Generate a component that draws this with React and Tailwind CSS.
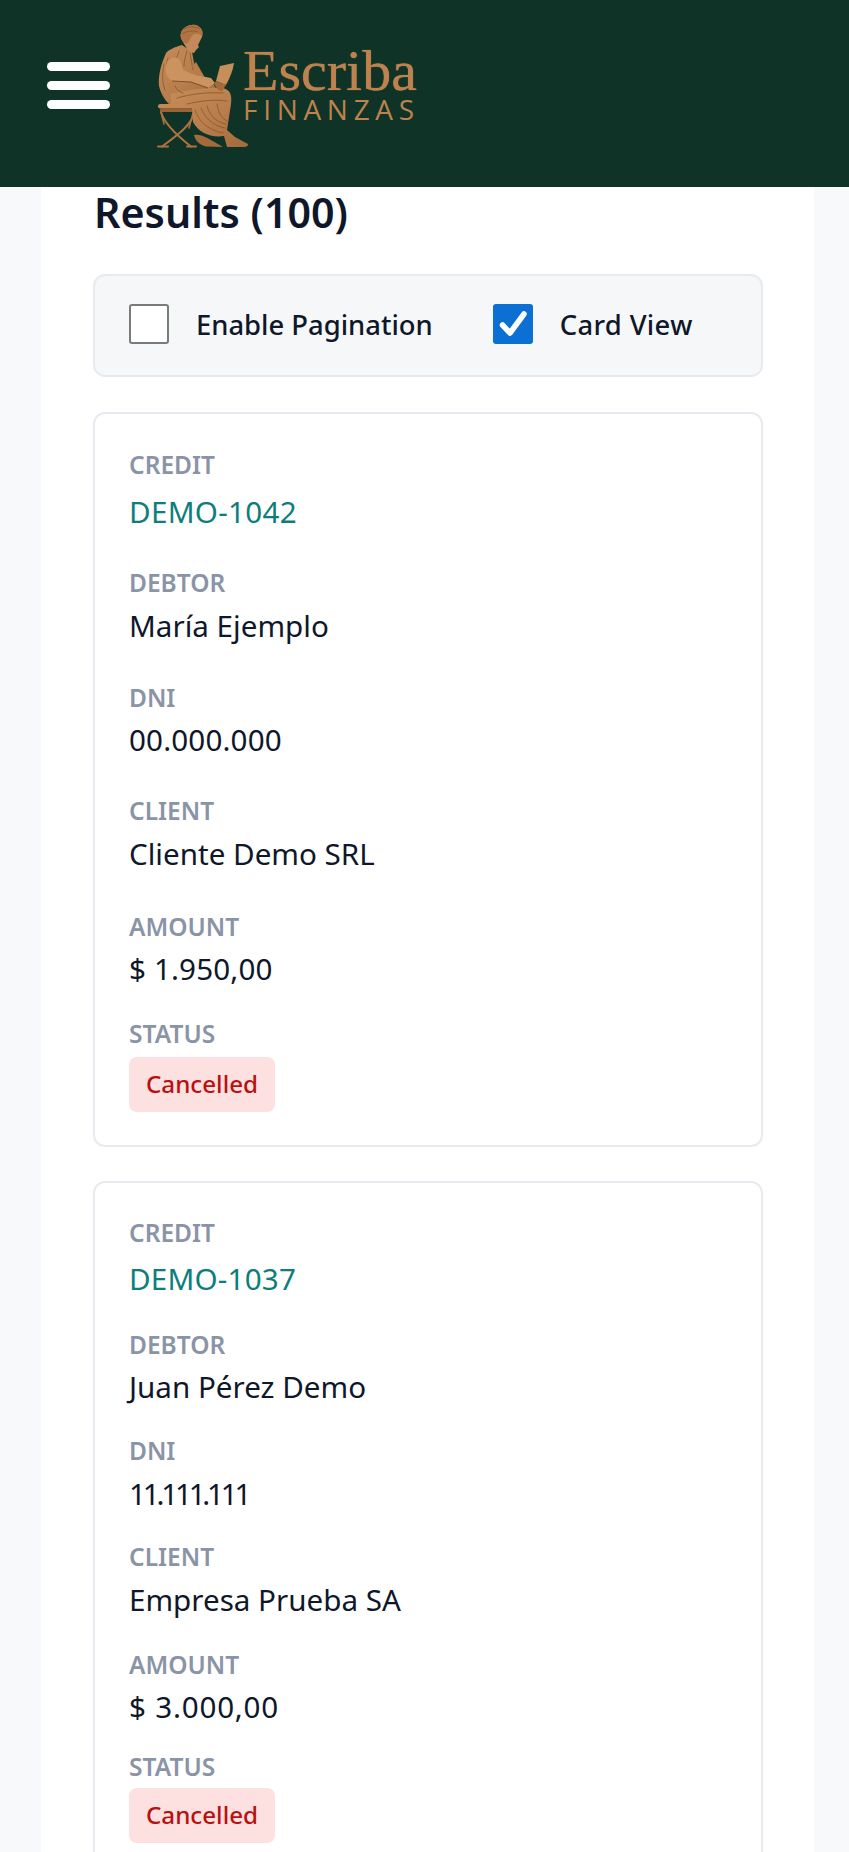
import React from "react";

function Logo() {
  return (
    <div className="flex items-center ml-[41px] mb-[13px]">
      <svg width="110" height="135" viewBox="0 0 110 135" className="block" aria-hidden="true">
        <defs>
          <linearGradient id="cu" x1="0" y1="0" x2="1" y2="1">
            <stop offset="0" stopColor="#c48c58" />
            <stop offset="0.55" stopColor="#b87d4c" />
            <stop offset="1" stopColor="#a26a3b" />
          </linearGradient>
        </defs>
        {/* stool */}
        <g stroke="#ad7240" strokeWidth="2" fill="none" strokeLinecap="round">
          <path d="M10 92 C13 103 24 114 40 126.5" />
          <path d="M43 93 C41 104 28 114 11 126.5" />
          <path d="M7 126.5 H17 M36 126.5 H45" />
          <path d="M10 92 L13 104" strokeWidth="1.5" />
          <path d="M42 93 L38 108" strokeWidth="1.5" />
        </g>
        <rect x="7" y="84" width="39" height="4.5" rx="2.2" fill="#c4874f" />
        <rect x="9" y="88.5" width="35" height="3.5" rx="1.5" fill="#9a6236" />
        {/* far foot */}
        <path d="M43 115 C50 113 60 120 72 127 L55 126.5 C48 125 44 120 43 115Z" fill="#a56a3b" />
        {/* back and torso */}
        <path d="M31 25 C24 27 17 30 15 33 C10 44 7 56 8 66 C10 74 14 80 18 84 L44 84 L66 70 L60 60 L50 55 L44 48 L41 32Z" fill="url(#cu)" />
        {/* robe */}
        <path d="M20 74 C36 70 60 67 72 68 C80 70 81 76 80 84 L76 110 L84 117 L97 124 C97 127 94 127 92 127 L76 127 L73 116 C60 118 48 113 42 102 L41 88 L20 84Z" fill="url(#cu)" />
        <g stroke="#8f562a" strokeWidth="1" fill="none" strokeLinecap="round" opacity="0.8">
          <path d="M26 78 C40 74 55 72 72 73" />
          <path d="M36 84 C50 81 62 79 76 81" />
          <path d="M44 90 C47 100 56 110 72 113" />
          <path d="M50 88 C54 98 62 106 74 108" />
          <path d="M56 86 C58 94 64 102 75 104" />
          <path d="M66 84 C67 92 70 98 76 101" />
          <path d="M13 44 C11 54 11 62 14 70" />
          <path d="M17 38 C15 44 15 48 16 52" />
          <path d="M24 66 C26 70 28 72 32 73" />
          <path d="M39 33 L42 50" />
          <path d="M36 31 C34 38 33 42 33 46" />
          <path d="M28 31 C27 35 26 37 25 39" />
        </g>
        {/* arm */}
        <path d="M16 42 C13 50 15 57 21 61 L40 62 L57 68 L64 63 L60 58 L44 55 L32 50 L29 40 C26 36 19 37 16 42Z" fill="#cb9360" />
        <path d="M21 61 L40 62 L57 68" stroke="#87502a" strokeWidth="1.2" fill="none" />
        <path d="M45 42 L53 56 L47 56 L41 46Z" fill="#b87c48" />
        {/* tablet */}
        <path d="M69 46 L83 43 C82 50 79 58 75 65 L65 61Z" fill="#c68e58" />
        <path d="M65 61 L75 65 L71 71 C67 71 65 67 63 64Z" fill="#a56a3b" />
        {/* head */}
        <path d="M30 13 C32 6 42 3 47 6 C52 9 52 14 51 17 L49 21 L47 25 L48 27 L45 30 L43 33 C40 33 36 30 35 27 L32 22 C30 19 29 16 30 13Z" fill="#c4895a" />
        <path d="M30 13 C32 6 42 3 47 6 C52 9 52 13 51 16 C46 12 41 14 39 19 L36 24 L32 22 C30 19 29 16 30 13Z" fill="#ae7443" />
        <path d="M33 9 C38 6 44 6 49 9 M31 14 C36 11 42 10 47 12" stroke="#8f562a" strokeWidth="0.8" fill="none" />
      </svg>
      <div className="ml-[-18px] flex flex-col items-start mb-[3px]">
        <span className="font-['Liberation_Serif',serif] text-[58px] leading-[44px] text-[#bd824d] [text-shadow:0_0_1px_#bd824d]">Escriba</span>
        <span className="font-['Open_Sans',sans-serif] font-normal text-[28px] leading-[26px] tracking-[5.7px] text-[#bd824d] mt-[3px]">FINANZAS</span>
      </div>
    </div>
  );
}

function Field({ label, value, link, gap, after, badge, track = "" }) {
  return (
    <div className={after}>
      <div className="text-[24.5px] leading-[32px] -mb-[2px] font-semibold text-[#8a94a6]">{label}</div>
      {badge ? (
        <span className={`${gap} inline-flex items-center rounded-[8px] bg-[#fde0e0] text-[#b91010] text-[24.2px] font-medium h-[55px] px-[17px]`}>{value}</span>
      ) : (
        <div className={`${gap} ${track} text-[29.6px] leading-[40px] ${link ? "text-[#0d7e7c]" : "text-[#0f172a]"}`}>{value}</div>
      )}
    </div>
  );
}

function Card({ className, fields }) {
  return (
    <div className={`rounded-[12px] border-2 border-[#e8eaef] bg-white px-[34px] ${className}`}>
      {fields}
    </div>
  );
}

export default function App() {
  return (
    <div className="h-screen overflow-hidden bg-[#f8f9fb] font-['Noto_Sans',sans-serif]">
      <header className="h-[187px] bg-[#0f3327] flex items-center">
        <button className="ml-[47px] mb-[16px] flex flex-col gap-[10px] w-[63px]" aria-label="Menu">
          <span className="block h-[9px] rounded-full bg-white" />
          <span className="block h-[9px] rounded-full bg-white" />
          <span className="block h-[9px] rounded-full bg-white" />
        </button>
        <Logo />
      </header>
      <main className="ml-[41px] w-[773px] bg-white pl-[52px] pr-[51px]">
        <h2 className="pl-[1px] text-[41.2px] leading-[51px] font-semibold text-[#0f172a]">Results (100)</h2>
        <div className="mt-[36px] h-[103px] rounded-[12px] border-2 border-[#e8eaef] bg-[#f6f7f9] flex items-center px-[34px] text-[27.4px] font-medium text-[#0f172a]">
          <span className="block w-[40px] h-[40px] -mt-[3px] rounded-[3px] border-2 border-[#7b7b7b] bg-white" />
          <span className="ml-[27px] -mt-[2px]">Enable Pagination</span>
          <span className="ml-[60px] w-[40px] h-[40px] -mt-[3px] rounded-[3px] bg-[#0b6fd3] flex items-center justify-center">
            <svg width="32" height="32" viewBox="0 0 32 32" fill="none" aria-hidden="true">
              <path d="M5.5 17 L13 25 L27 6" stroke="#fff" strokeWidth="5.5" strokeLinecap="round" strokeLinejoin="round" />
            </svg>
          </span>
          <span className="ml-[27px] -mt-[2px] tracking-[0.35px]">Card View</span>
        </div>
        <Card
          className="mt-[35px] pt-[35px] pb-[33px]"
          fields={
            <>
              <Field label="CREDIT" value="DEMO-1042" link track="tracking-[0.3px]" gap="mt-[13px]" after="mb-[35px]" />
              <Field label="DEBTOR" value="María Ejemplo" gap="mt-[9px]" after="mb-[36px]" />
              <Field label="DNI" value="00.000.000" track="tracking-[0.15px]" gap="mt-[8px]" after="mb-[35px]" />
              <Field label="CLIENT" value="Cliente Demo SRL" gap="mt-[9px]" after="mb-[37px]" />
              <Field label="AMOUNT" value="$ 1.950,00" track="tracking-[0.15px]" gap="mt-[8px]" after="mb-[29px]" />
              <Field label="STATUS" value="Cancelled" badge gap="mt-[9px]" after="" />
            </>
          }
        />
        <Card
          className="mt-[34px] pt-[34px] pb-[33px]"
          fields={
            <>
              <Field label="CREDIT" value="DEMO-1037" link track="tracking-[0.2px]" gap="mt-[12px]" after="mb-[30px]" />
              <Field label="DEBTOR" value="Juan Pérez Demo" gap="mt-[8px]" after="mb-[28px]" />
              <Field label="DNI" value="11.111.111" track="tracking-[-3.2px]" gap="mt-[9px]" after="mb-[27px]" />
              <Field label="CLIENT" value="Empresa Prueba SA" gap="mt-[9px]" after="mb-[29px]" />
              <Field label="AMOUNT" value="$ 3.000,00" track="tracking-[0.8px]" gap="mt-[8px]" after="mb-[24px]" />
              <Field label="STATUS" value="Cancelled" badge gap="mt-[7px]" after="" />
            </>
          }
        />
      </main>
    </div>
  );
}
